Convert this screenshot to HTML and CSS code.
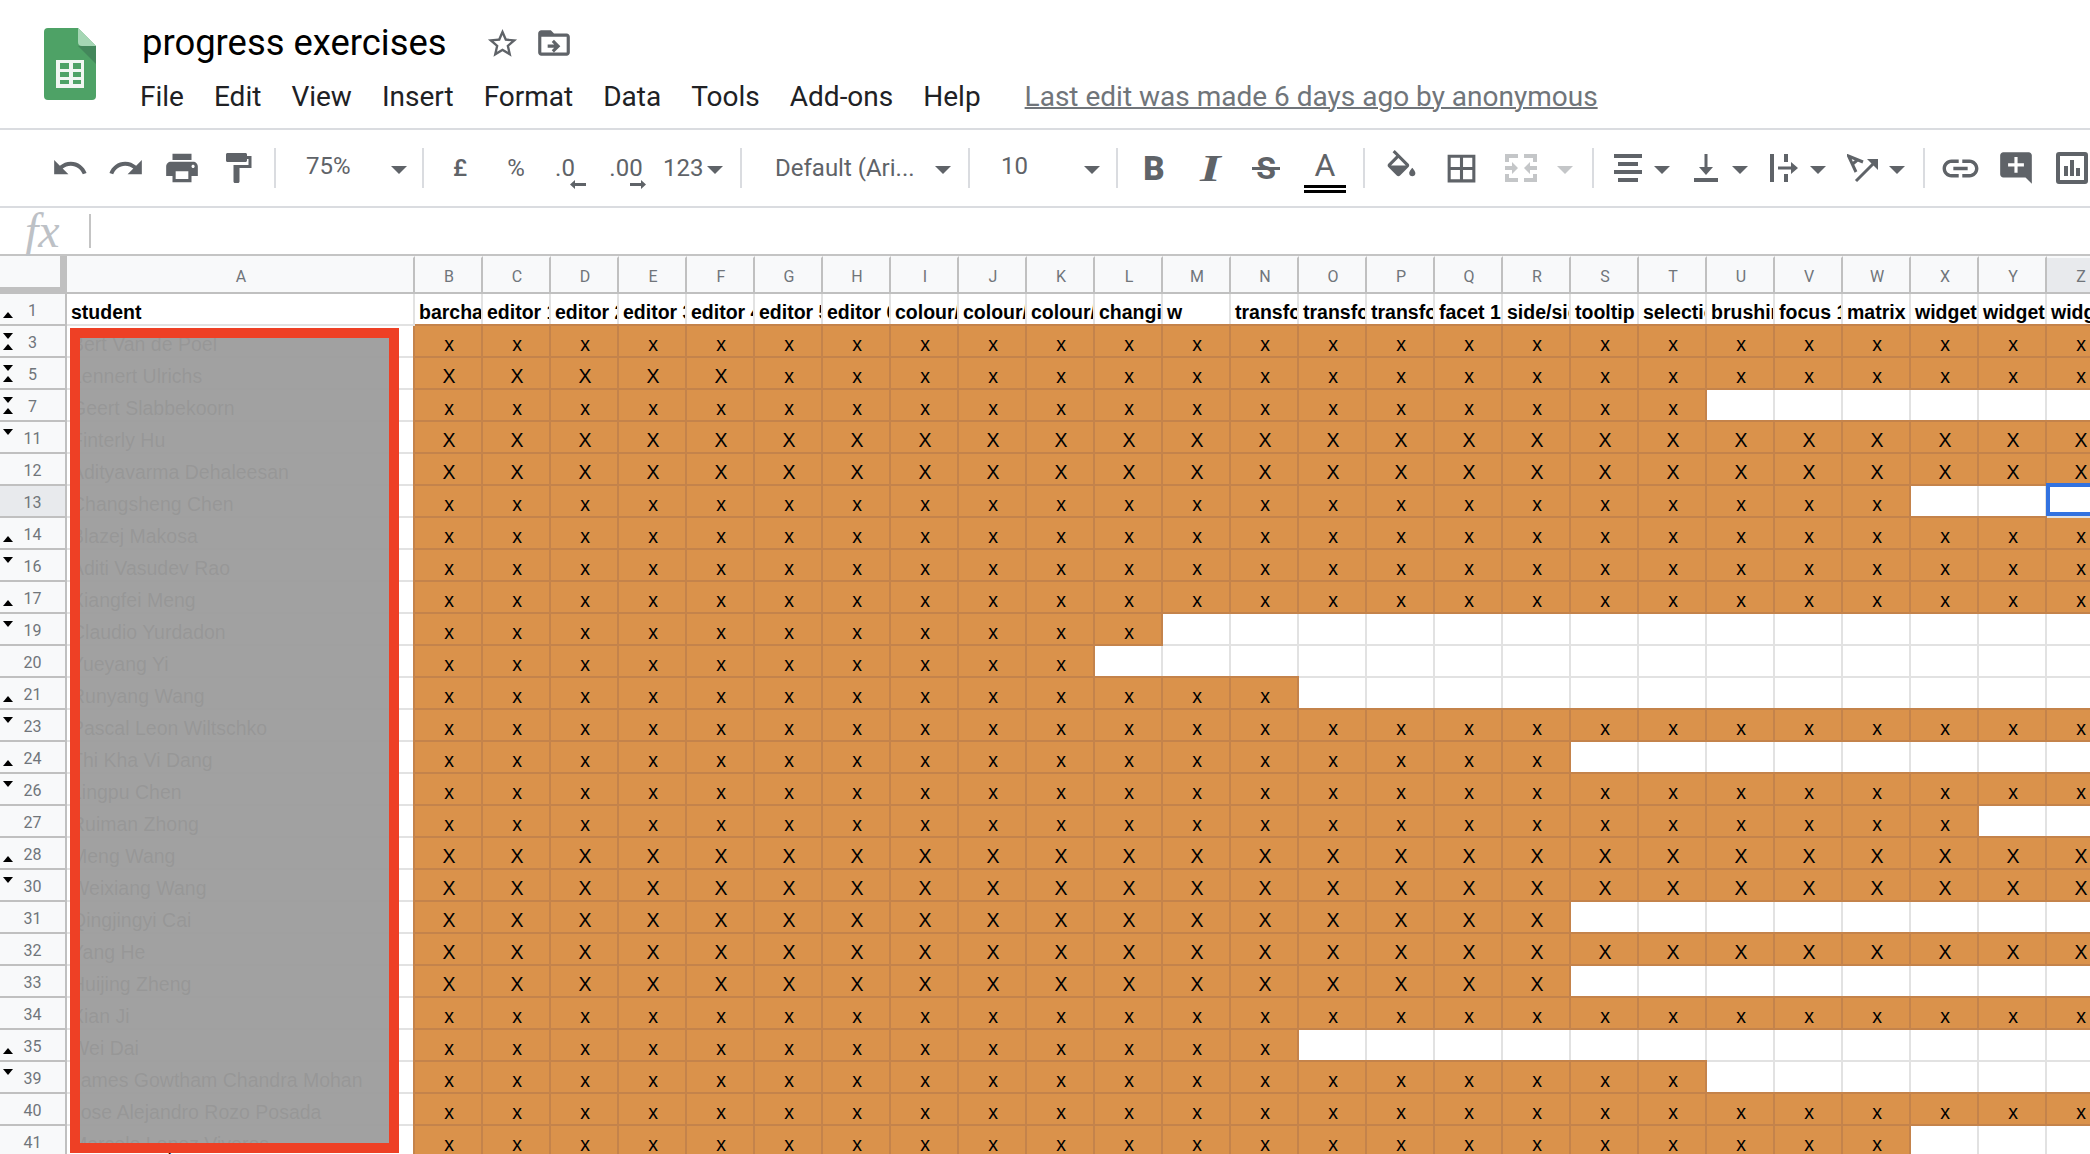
FILE: index.html
```html
<!DOCTYPE html>
<html lang="en">
<head>
<meta charset="utf-8">
<title>progress exercises</title>
<link rel="stylesheet" href="styles.css">
</head>
<body>
<header class="titlebar">
  <svg class="logo" viewBox="0 0 52 72"><path class="logo-page" d="M4 0H34L52 18V68a4 4 0 0 1-4 4H4a4 4 0 0 1-4-4V4a4 4 0 0 1 4-4z"/><path class="logo-shadow" d="M34 18L52 36V18z"/><path class="logo-fold" d="M34 0L52 18H38a4 4 0 0 1-4-4z"/><rect class="logo-table" x="12" y="32" width="28" height="28"/><path class="logo-cells" d="M16 35h9v6h-9zM29 35h8v6h-8zM16 44h9v5h-9zM29 44h8v5h-8zM16 52h9v4h-9zM29 52h8v4h-8z"/></svg>
  <div class="titletext">
    <div class="titlerow">
      <h1 class="doc">progress exercises</h1>
      <svg class="ic star" viewBox="0 0 24 24"><path d="M22 9.24l-7.19-.62L12 2 9.19 8.63 2 9.24l5.46 4.73L5.82 21 12 17.27 18.18 21l-1.63-7.03L22 9.24zM12 15.4l-3.76 2.27 1-4.28-3.32-2.88 4.38-.38L12 6.1l1.71 4.04 4.38.38-3.32 2.88 1 4.28L12 15.4z"/></svg>
      <svg class="ic move" viewBox="0 0 24 24"><path d="M20 6h-8l-2-2H4c-1.1 0-1.99.9-1.99 2L2 18c0 1.1.9 2 2 2h16c1.1 0 2-.9 2-2V8c0-1.1-.9-2-2-2zm0 12H4V8h16v10zm-7.84-5H8v2h4.16l-1.6 1.59L11.97 18 16 14l-4.03-4-1.41 1.41L12.16 13z"/></svg>
    </div>
    <nav class="menu"><span>File</span><span>Edit</span><span>View</span><span>Insert</span><span>Format</span><span>Data</span><span>Tools</span><span>Add-ons</span><span>Help</span><a class="lastedit">Last edit was made 6 days ago by anonymous</a></nav>
  </div>
</header>
<div class="toolbar">
  <div class="btn"><svg class="ic i38" viewBox="0 0 24 24"><path d="M12.5 8c-2.65 0-5.05.99-6.9 2.6L2 7v9h9l-3.62-3.62c1.39-1.16 3.16-1.88 5.12-1.88 3.54 0 6.55 2.31 7.6 5.5l2.37-.78C21.08 11.03 17.15 8 12.5 8z"/></svg></div>
  <div class="btn"><svg class="ic i38" viewBox="0 0 24 24"><path d="M18.4 10.6C16.55 8.99 14.15 8 11.5 8c-4.65 0-8.58 3.03-9.96 7.22L3.9 16c1.05-3.19 4.05-5.5 7.6-5.5 1.95 0 3.73.72 5.12 1.88L13 16h9V7l-3.6 3.6z"/></svg></div>
  <div class="btn"><svg class="ic i38" viewBox="0 0 24 24"><path d="M19 8H5c-1.66 0-3 1.34-3 3v6h4v4h12v-4h4v-6c0-1.66-1.34-3-3-3zm-3 11H8v-5h8v5zm3-7c-.55 0-1-.45-1-1s.45-1 1-1 1 .45 1 1-.45 1-1 1zm-1-9H6v4h12V3z"/></svg></div>
  <div class="btn"><svg class="ic i36" viewBox="0 0 24 24"><path d="M18 4V3c0-.55-.45-1-1-1H5c-.55 0-1 .45-1 1v4c0 .55.45 1 1 1h12c.55 0 1-.45 1-1V6h1v4H9v11c0 .55.45 1 1 1h2c.55 0 1-.45 1-1v-9h8V4h-3z"/></svg></div>
  <i class="sep sep-a"></i>
  <div class="select sel-zoom"><span class="tbtext">75%</span><i class="caret"></i></div>
  <i class="sep"></i>
  <div class="btn btn-first"><span class="tbtext low strong">£</span></div>
  <div class="btn"><span class="tbtext low">%</span></div>
  <div class="btn stack"><span class="tbtext small dec-one">.0</span><svg class="arrow arrow-l" viewBox="0 0 16 9"><path d="M0 4.5L5 0v3h11v3H5v3z"/></svg></div>
  <div class="btn stack"><span class="tbtext small dec-two">.00</span><svg class="arrow arrow-r" viewBox="0 0 16 9"><path d="M16 4.5L11 0v3H0v3h11v3z"/></svg></div>
  <div class="select sel-num"><span class="tbtext low">123</span><i class="caret"></i></div>
  <i class="sep sep-b"></i>
  <div class="select sel-font"><span class="tbtext low">Default (Ari...</span><i class="caret"></i></div>
  <i class="sep"></i>
  <div class="select sel-size"><span class="tbtext">10</span><i class="caret"></i></div>
  <i class="sep"></i>
  <div class="btn btn-first"><span class="g-bold">B</span></div>
  <div class="btn"><span class="g-italic">I</span></div>
  <div class="btn"><span class="g-strike">S</span></div>
  <div class="btn"><span class="g-color">A</span></div>
  <i class="sep sep-c"></i>
  <div class="btn w60 first-fill"><svg class="ic i37" viewBox="0 0 24 24"><path d="M16.56 8.94L7.62 0 6.21 1.41l2.38 2.38-5.15 5.15c-.59.59-.59 1.54 0 2.12l5.5 5.5c.29.29.68.44 1.06.44s.77-.15 1.06-.44l5.5-5.5c.59-.58.59-1.53 0-2.12zM5.21 10L10 5.21 14.79 10H5.21zM19 11.5s-2 2.17-2 3.5c0 1.1.9 2 2 2s2-.9 2-2c0-1.33-2-3.5-2-3.5z"/></svg></div>
  <div class="btn w60"><svg class="ic i37" viewBox="0 0 24 24"><path d="M3 3v18h18V3H3zm8 16H5v-6h6v6zm0-8H5V5h6v6zm8 8h-6v-6h6v6zm0-8h-6V5h6v6z"/></svg></div>
  <div class="btn w60"><svg class="ic off merge" viewBox="0 0 32 28"><path d="M0 0h13v4H4v4H0zM19 0h13v8h-4V4h-9zM0 20h4v4h9v4H0zM28 20h4v8H19v-4h9zM0 12h7V8l6 6-6 6v-4H0zM32 12h-7V8l-6 6 6 6v-4h7z"/></svg></div>
  <div class="caretslot"><i class="caret off"></i></div>
  <i class="sep sep-d"></i>
  <div class="pair pair-first"><svg class="ic align" viewBox="0 0 28 28"><path d="M0 0h28v4H0zM4 8h20v4H4zM0 16h28v4H0zM4 24h20v4H4z"/></svg><i class="caret"></i></div>
  <div class="pair"><svg class="ic valign" viewBox="0 0 24 28"><path d="M10.5 0h3v13H19l-7 8-7-8h5.500zM0 24h24v4H0z"/></svg><i class="caret"></i></div>
  <div class="pair"><svg class="ic wrap" viewBox="0 0 28 28"><path d="M0 0h4v28H0zM14 0h4v8h-4zM14 20h4v8h-4zM8 12.500h13V8l7 6-7 6v-4.500H8z"/></svg><i class="caret"></i></div>
  <div class="pair"><svg class="ic rotate" viewBox="0 0 31 29"><path class="rot-line" d="M9 18L1.500 2 16 8M5 10.500L11 5.500M9 27L28 8"/><path d="M20 5h11v11z"/></svg><i class="caret"></i></div>
  <i class="sep sep-e"></i>
  <div class="btn btn-link"><svg class="ic i42" viewBox="0 0 24 24"><path d="M3.900 12c0-1.710 1.390-3.100 3.100-3.100h4V7H7c-2.760 0-5 2.240-5 5s2.240 5 5 5h4v-1.900H7c-1.710 0-3.100-1.390-3.100-3.100zM8 13h8v-2H8v2zm9-6h-4v1.900h4c1.710 0 3.100 1.390 3.100 3.100s-1.390 3.100-3.100 3.100h-4V17h4c2.760 0 5-2.240 5-5s-2.240-5-5-5z"/></svg></div>
  <div class="btn"><svg class="ic i38" viewBox="0 0 24 24"><path d="M21.990 4c0-1.100-.89-2-1.990-2H4c-1.100 0-2 .9-2 2v12c0 1.100.9 2 2 2h14l4 4-.01-18zM17 11h-4v4h-2v-4H7V9h4V5h2v4h4v2z"/></svg></div>
  <div class="btn"><svg class="ic chart" viewBox="0 0 32 32"><rect class="chart-box" x="2" y="2" width="28" height="28" rx="1"/><path d="M8 14h4v10H8zM14 8h4v16h-4zM20 16h4v8h-4z"/></svg></div>
</div>
<div class="formula"><span class="fx">fx</span><i class="fxsep"></i></div>
<main class="sheet">
<table class="grid">
<tr><th class="corner"></th><th class="ch cola">A</th><th class="ch">B</th><th class="ch">C</th><th class="ch">D</th><th class="ch">E</th><th class="ch">F</th><th class="ch">G</th><th class="ch">H</th><th class="ch">I</th><th class="ch">J</th><th class="ch">K</th><th class="ch">L</th><th class="ch">M</th><th class="ch">N</th><th class="ch">O</th><th class="ch">P</th><th class="ch">Q</th><th class="ch">R</th><th class="ch">S</th><th class="ch">T</th><th class="ch">U</th><th class="ch">V</th><th class="ch">W</th><th class="ch">X</th><th class="ch">Y</th><th class="ch chsel">Z</th></tr>
<tr><th class="rh u">1</th><td class="h">student<td class="h">barcha<td class="h">editor 1<td class="h">editor 2<td class="h">editor 3<td class="h">editor 4<td class="h">editor 5<td class="h">editor 6<td class="h">colour/size<td class="h">colour/size<td class="h">colour/size<td class="h">changing<td class="h">w<td class="h">transform<td class="h">transform<td class="h">transform<td class="h">facet 1<td class="h">side/side<td class="h">tooltip<td class="h">selection<td class="h">brushing<td class="h">focus 1<td class="h">matrix<td class="h">widget<td class="h">widget<td class="h">widget</tr>
<tr><th class="rh u d">3</th><td class="n">Bert Van de Poel<td>x<td>x<td>x<td>x<td>x<td>x<td>x<td>x<td>x<td>x<td>x<td>x<td>x<td>x<td>x<td>x<td>x<td>x<td>x<td>x<td>x<td>x<td>x<td>x<td>x<td>x</tr>
<tr><th class="rh u d">5</th><td class="n">Lennert Ulrichs<td>X<td>X<td>X<td>X<td>X<td>x<td>x<td>x<td>x<td>x<td>x<td>x<td>x<td>x<td>x<td>x<td>x<td>x<td>x<td>x<td>x<td>x<td>x<td>x<td>x</tr>
<tr><th class="rh u d">7</th><td class="n">Geert Slabbekoorn<td>x<td>x<td>x<td>x<td>x<td>x<td>x<td>x<td>x<td>x<td>x<td>x<td>x<td>x<td>x<td>x<td>x<td>x<td>x<td class="e"><td class="e"><td class="e"><td class="e"><td class="e"><td class="e"></tr>
<tr><th class="rh d">11</th><td class="n">Finterly Hu<td>X<td>X<td>X<td>X<td>X<td>X<td>X<td>X<td>X<td>X<td>X<td>X<td>X<td>X<td>X<td>X<td>X<td>X<td>X<td>X<td>X<td>X<td>X<td>X<td>X</tr>
<tr><th class="rh">12</th><td class="n">Adityavarma Dehaleesan<td>X<td>X<td>X<td>X<td>X<td>X<td>X<td>X<td>X<td>X<td>X<td>X<td>X<td>X<td>X<td>X<td>X<td>X<td>X<td>X<td>X<td>X<td>X<td>X<td>X</tr>
<tr><th class="rh rsel">13</th><td class="n">Changsheng Chen<td>x<td>x<td>x<td>x<td>x<td>x<td>x<td>x<td>x<td>x<td>x<td>x<td>x<td>x<td>x<td>x<td>x<td>x<td>x<td>x<td>x<td>x<td class="e"><td class="e"><td class="e sel"></tr>
<tr><th class="rh u">14</th><td class="n">Blazej Makosa<td>x<td>x<td>x<td>x<td>x<td>x<td>x<td>x<td>x<td>x<td>x<td>x<td>x<td>x<td>x<td>x<td>x<td>x<td>x<td>x<td>x<td>x<td>x<td>x<td>x</tr>
<tr><th class="rh d">16</th><td class="n">Aditi Vasudev Rao<td>x<td>x<td>x<td>x<td>x<td>x<td>x<td>x<td>x<td>x<td>x<td>x<td>x<td>x<td>x<td>x<td>x<td>x<td>x<td>x<td>x<td>x<td>x<td>x<td>x</tr>
<tr><th class="rh u">17</th><td class="n">Xiangfei Meng<td>x<td>x<td>x<td>x<td>x<td>x<td>x<td>x<td>x<td>x<td>x<td>x<td>x<td>x<td>x<td>x<td>x<td>x<td>x<td>x<td>x<td>x<td>x<td>x<td>x</tr>
<tr><th class="rh d">19</th><td class="n">Claudio Yurdadon<td>x<td>x<td>x<td>x<td>x<td>x<td>x<td>x<td>x<td>x<td>x<td class="e"><td class="e"><td class="e"><td class="e"><td class="e"><td class="e"><td class="e"><td class="e"><td class="e"><td class="e"><td class="e"><td class="e"><td class="e"><td class="e"></tr>
<tr><th class="rh">20</th><td class="n">Yueyang Yi<td>x<td>x<td>x<td>x<td>x<td>x<td>x<td>x<td>x<td>x<td class="e"><td class="e"><td class="e"><td class="e"><td class="e"><td class="e"><td class="e"><td class="e"><td class="e"><td class="e"><td class="e"><td class="e"><td class="e"><td class="e"><td class="e"></tr>
<tr><th class="rh u">21</th><td class="n">Runyang Wang<td>x<td>x<td>x<td>x<td>x<td>x<td>x<td>x<td>x<td>x<td>x<td>x<td>x<td class="e"><td class="e"><td class="e"><td class="e"><td class="e"><td class="e"><td class="e"><td class="e"><td class="e"><td class="e"><td class="e"><td class="e"></tr>
<tr><th class="rh d">23</th><td class="n">Pascal Leon Wiltschko<td>x<td>x<td>x<td>x<td>x<td>x<td>x<td>x<td>x<td>x<td>x<td>x<td>x<td>x<td>x<td>x<td>x<td>x<td>x<td>x<td>x<td>x<td>x<td>x<td>x</tr>
<tr><th class="rh u">24</th><td class="n">Thi Kha Vi Dang<td>x<td>x<td>x<td>x<td>x<td>x<td>x<td>x<td>x<td>x<td>x<td>x<td>x<td>x<td>x<td>x<td>x<td class="e"><td class="e"><td class="e"><td class="e"><td class="e"><td class="e"><td class="e"><td class="e"></tr>
<tr><th class="rh d">26</th><td class="n">Lingpu Chen<td>x<td>x<td>x<td>x<td>x<td>x<td>x<td>x<td>x<td>x<td>x<td>x<td>x<td>x<td>x<td>x<td>x<td>x<td>x<td>x<td>x<td>x<td>x<td>x<td>x</tr>
<tr><th class="rh">27</th><td class="n">Ruiman Zhong<td>x<td>x<td>x<td>x<td>x<td>x<td>x<td>x<td>x<td>x<td>x<td>x<td>x<td>x<td>x<td>x<td>x<td>x<td>x<td>x<td>x<td>x<td>x<td class="e"><td class="e"></tr>
<tr><th class="rh u">28</th><td class="n">Meng Wang<td>X<td>X<td>X<td>X<td>X<td>X<td>X<td>X<td>X<td>X<td>X<td>X<td>X<td>X<td>X<td>X<td>X<td>X<td>X<td>X<td>X<td>X<td>X<td>X<td>X</tr>
<tr><th class="rh d">30</th><td class="n">Weixiang Wang<td>X<td>X<td>X<td>X<td>X<td>X<td>X<td>X<td>X<td>X<td>X<td>X<td>X<td>X<td>X<td>X<td>X<td>X<td>X<td>X<td>X<td>X<td>X<td>X<td>X</tr>
<tr><th class="rh">31</th><td class="n">Qingjingyi Cai<td>X<td>X<td>X<td>X<td>X<td>X<td>X<td>X<td>X<td>X<td>X<td>X<td>X<td>X<td>X<td>X<td>X<td class="e"><td class="e"><td class="e"><td class="e"><td class="e"><td class="e"><td class="e"><td class="e"></tr>
<tr><th class="rh">32</th><td class="n">Yang He<td>X<td>X<td>X<td>X<td>X<td>X<td>X<td>X<td>X<td>X<td>X<td>X<td>X<td>X<td>X<td>X<td>X<td>X<td>X<td>X<td>X<td>X<td>X<td>X<td>X</tr>
<tr><th class="rh">33</th><td class="n">Huijing Zheng<td>X<td>X<td>X<td>X<td>X<td>X<td>X<td>X<td>X<td>X<td>X<td>X<td>X<td>X<td>X<td>X<td>X<td class="e"><td class="e"><td class="e"><td class="e"><td class="e"><td class="e"><td class="e"><td class="e"></tr>
<tr><th class="rh">34</th><td class="n">Xian Ji<td>x<td>x<td>x<td>x<td>x<td>x<td>x<td>x<td>x<td>x<td>x<td>x<td>x<td>x<td>x<td>x<td>x<td>x<td>x<td>x<td>x<td>x<td>x<td>x<td>x</tr>
<tr><th class="rh u">35</th><td class="n">Wei Dai<td>x<td>x<td>x<td>x<td>x<td>x<td>x<td>x<td>x<td>x<td>x<td>x<td>x<td class="e"><td class="e"><td class="e"><td class="e"><td class="e"><td class="e"><td class="e"><td class="e"><td class="e"><td class="e"><td class="e"><td class="e"></tr>
<tr><th class="rh d">39</th><td class="n">James Gowtham Chandra Mohan<td>x<td>x<td>x<td>x<td>x<td>x<td>x<td>x<td>x<td>x<td>x<td>x<td>x<td>x<td>x<td>x<td>x<td>x<td>x<td class="e"><td class="e"><td class="e"><td class="e"><td class="e"><td class="e"></tr>
<tr><th class="rh">40</th><td class="n">Jose Alejandro Rozo Posada<td>x<td>x<td>x<td>x<td>x<td>x<td>x<td>x<td>x<td>x<td>x<td>x<td>x<td>x<td>x<td>x<td>x<td>x<td>x<td>x<td>x<td>x<td>x<td>x<td>x</tr>
<tr><th class="rh">41</th><td class="n">Marcelo Lopez Viveros<td>x<td>x<td>x<td>x<td>x<td>x<td>x<td>x<td>x<td>x<td>x<td>x<td>x<td>x<td>x<td>x<td>x<td>x<td>x<td>x<td>x<td>x<td class="e"><td class="e"><td class="e"></tr>
</table>
<div class="redact"></div>
</main>
</body>
</html>
```
FILE: styles.css
```css
* { box-sizing: border-box; }
html, body { margin: 0; height: 100%; }
body { width: 2090px; height: 1154px; overflow: hidden; background: #fff; display: flex; flex-direction: column; font-family: Roboto, "Liberation Sans", sans-serif; color: #202124; }
svg { display: block; }
.ic { fill: #5f6368; flex: none; }

.titlebar { flex: none; height: 130px; border-bottom: 2px solid #dadce0; display: flex; padding-left: 44px; }
.logo { width: 52px; height: 72px; margin-top: 28px; flex: none; }
.logo-page { fill: #4ea266; }
.logo-shadow { fill: #43875b; }
.logo-fold { fill: #a5d6b4; }
.logo-table { fill: #f1f6f2; }
.logo-cells { fill: #4ea266; }
.titletext { margin-left: 45px; display: flex; flex-direction: column; }
.titlerow { display: flex; align-items: center; height: 44px; margin-top: 21px; padding-left: 1px; }
.doc { margin: 0; font-weight: 400; font-size: 36.4px; color: #000; line-height: 44px; width: 343px; white-space: nowrap; }
.star { width: 35px; height: 35px; }
.move { width: 38px; height: 38px; margin-left: 15px; }
.menu { display: flex; font-size: 28px; line-height: 32px; margin-top: 16px; margin-left: -1px; gap: 30px; white-space: nowrap; }
.lastedit { color: #70757a; text-decoration: underline; text-decoration-thickness: 2px; margin-left: 14px; }

.toolbar { flex: none; height: 78px; border-bottom: 2px solid #dadce0; display: flex; align-items: center; padding-left: 42px; overflow: hidden; }
.btn { flex: none; width: 56px; height: 56px; display: flex; align-items: center; justify-content: center; }
.btn-first { margin-left: 8px; }
.btn-link { margin-left: 7px; }
.w60 { width: 60px; }
.first-fill { margin-left: 6px; }
.sep { flex: none; width: 2px; height: 40px; background: #dadce0; }
.sep-a { margin-left: 8px; }
.sep-b { margin-left: 14px; }
.sep-c { margin-left: 13px; }
.sep-d { margin-left: 13px; }
.sep-e { margin-left: 11px; }
.tbtext { font-size: 24px; color: #5f6368; white-space: nowrap; margin-top: -4px; }
.tbtext.low { margin-top: -1px; }
.strong { font-weight: 500; }
.tbtext.small { margin-top: 0; }
.dec-one { margin-right: 14px; }
.dec-two { margin-right: 4px; }
.select { flex: none; display: flex; align-items: center; height: 56px; }
.sel-zoom { width: 146px; padding-left: 30px; }
.sel-zoom .caret { margin-left: 40px; }
.sel-num { width: 70px; padding-left: 7px; }
.sel-num .caret { margin-left: 4px; }
.sel-font { width: 226px; padding-left: 33px; }
.sel-font .caret { margin-left: 20px; }
.sel-size { width: 146px; padding-left: 31px; }
.sel-size .caret { margin-left: 56px; }
.caret { flex: none; display: block; width: 0; height: 0; border-left: 8px solid transparent; border-right: 8px solid transparent; border-top: 8px solid #5f6368; margin-top: 3px; }
.caret.off { border-top-color: #c4c6c8; }
.caretslot { flex: none; width: 28px; display: flex; justify-content: center; }
.stack { flex-direction: column; padding-top: 7px; }
.arrow { width: 16px; height: 9px; fill: #5f6368; margin-top: -2px; }
.arrow-l { margin-left: 12px; }
.arrow-r { margin-left: 20px; }
.i36 { width: 36px; height: 36px; }
.i37 { width: 37px; height: 37px; }
.i38 { width: 38px; height: 38px; }
.i42 { width: 43px; height: 43px; }
.off { fill: #c4c6c8; }
.merge { width: 32px; height: 28px; }
.g-bold { font: 900 33px/1 Roboto, sans-serif; color: #5f6368; }
.g-italic { font: italic 700 38px/1 "Liberation Serif", serif; color: #5f6368; display: inline-block; transform: scaleX(1.4); }
.g-strike { position: relative; font: 700 32px/1 Roboto, sans-serif; color: #5f6368; }
.g-strike::after { content: ""; position: absolute; left: -4px; right: -4px; top: 15px; height: 3px; background: #5f6368; }
.g-color { font: 400 32px/39px Roboto, sans-serif; color: #5f6368; width: 42px; text-align: center; padding-top: 3px; margin-left: 6px; border-bottom: 8px double #000; }
.pair { flex: none; width: 78px; display: flex; align-items: center; }
.pair-first { margin-left: 6px; }
.align { width: 28px; height: 28px; margin-left: 14px; margin-right: 12px; }
.valign { width: 24px; height: 28px; margin-left: 16px; margin-right: 14px; }
.wrap { width: 28px; height: 28px; margin-left: 14px; margin-right: 12px; }
.rotate { width: 31px; height: 29px; margin-left: 13px; margin-right: 11px; }
.rot-line { fill: none; stroke: #5f6368; stroke-width: 3; }
.chart { width: 32px; height: 32px; }
.chart-box { fill: none; stroke: #5f6368; stroke-width: 4; }

.formula { flex: none; height: 48px; border-bottom: 2px solid #c4c4c4; display: flex; align-items: center; padding-left: 25px; }
.fx { font: italic 400 48px/46px "Liberation Serif", serif; color: #bdc1c6; width: 64px; }
.fxsep { flex: none; width: 2px; height: 34px; background: #c4c4c4; }

.sheet { position: relative; flex: 1; overflow: hidden; }
.grid { border-spacing: 0; table-layout: fixed; width: 2115px; font: 19.5px/22px "Liberation Sans", Arial, sans-serif; color: #000; }
.grid th { padding: 0; font-family: Roboto, sans-serif; font-weight: 400; font-size: 16px; color: #70757a; background: #f8f9fa; }
.corner { width: 67px; height: 38px; border-right: 7px solid #c0c0c0; border-bottom: 7px solid #c0c0c0; }
.ch { width: 68px; height: 38px; border-top: 2px solid #f8f9fa; border-right: 2px solid #c0c0c0; border-bottom: 2px solid #c0c0c0; }
.grid th.ch { padding: 4px 0 0 2px; }
.grid th.cola { width: 348px; }
.grid th.chsel { background: #e8eaed; }
.rh { position: relative; height: 32px; border-right: 2px solid #c0c0c0; border-bottom: 2px solid #c0c0c0; text-align: center; }
.grid th.rh { padding-top: 4px; }
.grid th.rsel { background: #e8eaed; }
.d::before, .u::after { content: ""; position: absolute; left: 3px; width: 0; height: 0; border-left: 5px solid transparent; border-right: 5px solid transparent; }
.d::before { top: 7px; border-top: 6px solid #000; }
.u::after { top: 18px; border-bottom: 6px solid #000; }
.grid td { height: 32px; padding: 0 0 1px 2px; vertical-align: bottom; text-align: center; white-space: nowrap; overflow: hidden; background: #da924b; border-right: 2px solid #c4834b; border-bottom: 2px solid #c4834b; box-shadow: -2px 0 0 #c4834b, 0 -2px 0 #c4834b; }
.grid td.e, .grid td.h, .grid td.n { background: #fff; border-color: #e2e2e2; box-shadow: none; }
.grid td.h { font-weight: 700; text-align: left; padding-left: 4px; }
.grid td.n { text-align: left; padding-left: 4px; }
.grid td.sel { position: relative; overflow: visible; }
.sel::after { content: ""; position: absolute; left: -1px; top: -3px; bottom: 0; width: 60px; border: 4px solid #3272e0; }
.redact { position: absolute; left: 70px; top: 72px; width: 329px; height: 825px; border: 10px solid #ee4025; background: rgba(157, 157, 157, .96); }
```
